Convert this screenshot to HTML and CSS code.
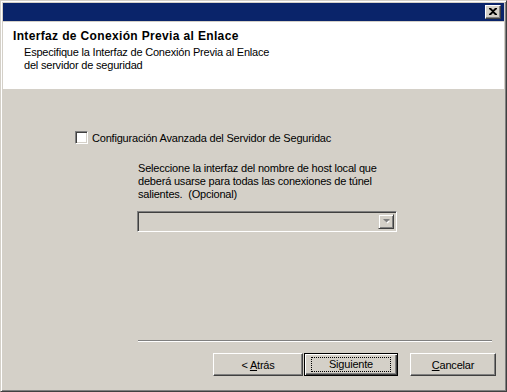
FILE: index.html
```html
<!DOCTYPE html>
<html lang="es">
<head>
  <meta charset="UTF-8" />
  <title>Interfaz de Conexión Previa al Enlace</title>
  <link rel="stylesheet" href="styles.css">
</head>
<body>

<div class="window">
  <div class="titlebar">
    <button class="close-btn" aria-label="Cerrar">
      <svg width="8" height="7" viewBox="0 0 8 7">
        <path d="M0 0h2l2 2 2-2h2v1L5 3.5 8 6v1H6L4 5 2 7H0V6l3-2.5L0 1z" fill="#000"/>
      </svg>
    </button>
  </div>

  <div class="header">
    <div class="header-title">Interfaz de Conexión Previa al Enlace</div>
    <div class="header-sub">Especifique la Interfaz de Conexión Previa al Enlace<br>del servidor de seguridad</div>
  </div>

  <div class="content">
    <label class="check-row">
      <span class="checkbox"></span>
      <span>Configuración Avanzada del Servidor de Seguridac</span>
    </label>

    <p class="hint">Seleccione la interfaz del nombre de host local que<br>deberá usarse para todas las conexiones de túnel<br>salientes.&nbsp; (Opcional)</p>

    <div class="combo">
      <span class="combo-arrow">
        <svg width="7" height="5" viewBox="0 0 7 5">
          <path d="M1 1h5l-2.5 2.5z" fill="#fff" transform="translate(1 1)"/>
          <path d="M0 0h7L3.5 3.5z" fill="#808080"/>
        </svg>
      </span>
    </div>
  </div>

  <div class="footer">
    <div class="separator"></div>
    <div class="buttons">
      <button class="btn btn-back">&lt; <u>A</u>trás</button>
      <button class="btn btn-default"><span class="focus">Siguiente</span></button>
      <button class="btn btn-cancel"><u>C</u>ancelar</button>
    </div>
  </div>
</div>

</body>
</html>
```

FILE: styles.css
```css
html, body { margin: 0; padding: 0; background: #d4d0c8; }
body { font-family: "Liberation Sans", Arial, sans-serif; font-size: 11px; color: #000; letter-spacing: -0.2px; }

.window {
  width: 507px; height: 392px; box-sizing: border-box;
  background: #d4d0c8; padding: 2px;
  border: 1px solid; border-color: #d4d0c8 #404040 #404040 #d4d0c8;
  box-shadow: inset 1px 1px #fff, inset -1px -1px #808080;
  display: flex; flex-direction: column;
}

.titlebar {
  height: 18px; background: #0a246a;
  display: flex; justify-content: flex-end; align-items: flex-start;
  padding: 2px 3px 0 0; box-sizing: border-box;
}
.close-btn {
  width: 16px; height: 14px; padding: 0; margin: 0;
  background: #d4d0c8; border: 1px solid; border-color: #fff #404040 #404040 #fff;
  box-shadow: inset -1px -1px #808080;
  display: flex; align-items: center; justify-content: center;
}
.close-btn svg { display: block; margin: 0 1px 1px 0; }

.header {
  margin-top: 1px; height: 67px; background: #fff;
  padding: 7px 0 0 10px; box-sizing: border-box;
}
.header-title { font-weight: bold; font-size: 12px; line-height: 15px; letter-spacing: 0.35px; }
.header-sub { margin: 2px 0 0 11px; line-height: 13px; }

.content { flex: 1; padding: 42px 0 0 0; }

.check-row { display: flex; align-items: center; margin-left: 72px; height: 13px; }
.checkbox {
  width: 13px; height: 13px; box-sizing: border-box; background: #fff;
  border: 1px solid; border-color: #808080 #fff #fff #808080;
  box-shadow: inset 1px 1px #404040, inset -1px -1px #d4d0c8;
  margin-right: 4px;
}

.hint { margin: 18px 0 0 135px; line-height: 13px; }

.combo {
  margin: 10px 0 0 134px; width: 260px; height: 21px; box-sizing: border-box;
  background: #d4d0c8;
  border: 1px solid; border-color: #808080 #fff #fff #808080;
  box-shadow: inset 1px 1px #404040, inset -1px -1px #d4d0c8;
  padding: 2px; display: flex; justify-content: flex-end;
}
.combo-arrow {
  width: 16px; height: 15px; box-sizing: border-box; background: #d4d0c8;
  border: 1px solid; border-color: #d4d0c8 #404040 #404040 #d4d0c8;
  box-shadow: inset 1px 1px #fff, inset -1px -1px #808080;
  display: flex; align-items: center; justify-content: center;
}

.footer { padding: 0 8px 13px 135px; }
.separator { height: 0; border-top: 1px solid #808080; border-bottom: 1px solid #fff; margin-right: 4px; }
.buttons { display: flex; justify-content: flex-end; margin-top: 11px; }

.btn {
  height: 23px; box-sizing: border-box; padding: 0; margin: 0;
  font-family: inherit; font-size: 11px; color: #000; letter-spacing: inherit;
  background: #d4d0c8;
  border: 1px solid; border-color: #fff #404040 #404040 #fff;
  box-shadow: inset -1px -1px #808080;
}
.btn-back { width: 90px; }
.btn-default {
  width: 94px; margin-left: 1px;
  border-color: #000;
  box-shadow: inset 1px 1px #fff, inset -1px -1px #404040, inset -2px -2px #808080;
  display: flex; align-items: center; justify-content: center;
}
.btn-default .focus {
  display: block; width: 80px; height: 15px; line-height: 13px; box-sizing: border-box;
  border: 1px dotted #000; text-align: center;
}
.btn-cancel { width: 86px; margin-left: 12px; }
```
